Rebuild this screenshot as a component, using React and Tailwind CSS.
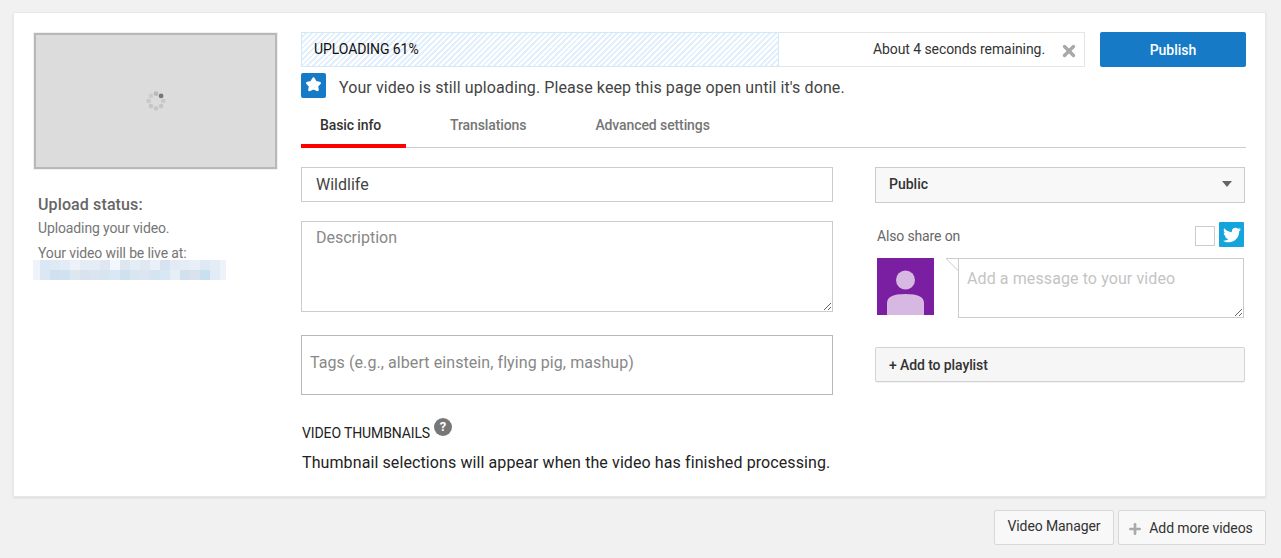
import { Plus, X } from "lucide-react";
import { FaTwitter } from "react-icons/fa";

const blurRows = [
  ["#f0f3f9", "#d9e8f4", "#dfe9f3", "#e3ecf6", "#edf2f9", "#e4edf6", "#e4ecf6", "#dfe8f2", "#f3f6fb", "#dde6f1", "#e4edf5", "#e0e8f1", "#eaf0f8", "#d7e3f0", "#e2ebf5", "#e4edf6", "#e8eff8", "#dfe9f4", "#e4edf6", "#eef3fb"],
  ["#f0f3f9", "#dbe8f4", "#d0e0ee", "#d2e1ef", "#dde7f2", "#d9e3f0", "#dbe4f0", "#d7e5f1", "#d9e8f4", "#cfe0ee", "#d8e6f2", "#dce6f0", "#d4e4f1", "#d8e7f3", "#e6eef6", "#d3e0ee", "#dae2ee", "#c9e0ee", "#e2ebf6", "#eef3fb"],
];

function Spinner() {
  const dots = [
    [19, 5.4, "#b9b9b9"], [25, 8, "#777777"], [27.6, 14, "#c9c9c9"], [25, 20, "#c6c6c6"],
    [19, 22.6, "#c6c6c6"], [13, 20, "#c6c6c6"], [10.4, 14, "#c9c9c9"], [13, 8, "#cccccc"],
  ];
  return (
    <svg width="22" height="22" viewBox="6 1 26 26">
      {dots.map(([cx, cy, fill]) => <circle key={`${cx}-${cy}`} cx={cx} cy={cy} r="2.8" fill={fill} />)}
    </svg>
  );
}

function UploadSide() {
  return (
    <div className="w-[245px] ml-[-1px] mr-[23px] shrink-0">
      <div className="h-[138px] border border-[#f0f0f0]">
        <div className="h-full border-2 border-[#b8b8b8] bg-[#dcdcdc] flex items-center justify-center">
          <Spinner />
        </div>
      </div>
      <div className="mt-[24px] pl-[5px] text-[#767676]">
        <h3 className="text-[16px] leading-[22px] font-medium tracking-[0.12px] text-[#666666]">Upload status:</h3>
        <p className="mt-[2px] text-[14px] leading-[20px] tracking-[-0.12px]">Uploading your video.</p>
        <p className="mt-[5px] text-[14px] leading-[20px] tracking-[-0.12px]">Your video will be live at:</p>
      </div>
      <div className="mt-[-3px]">
        {blurRows.map((row, i) => (
          <div key={i} className="flex h-[10px]">
            {row.map((color, j) => (
              <span key={j} className={j === 0 ? "w-[7px] h-full shrink-0" : j === 19 ? "w-[6px] h-full shrink-0" : "w-[10px] h-full shrink-0"} style={{ backgroundColor: color }} />
            ))}
          </div>
        ))}
      </div>
    </div>
  );
}

function ProgressRow() {
  return (
    <div className="flex gap-[15px]">
      <div className="relative flex-1 h-[35px] border border-[#e5e5e5] flex items-center justify-end text-[14px] tracking-[-0.08px]">
        <div className="absolute left-[-1px] top-[-1px] bottom-[-1px] w-[478px] border border-[#d3e8f8] bg-[repeating-linear-gradient(135deg,#ffffff_0px,#ffffff_2px,#e1f0fc_2px,#e1f0fc_4px)] flex items-center pl-[12px] text-[#111111]">
          UPLOADING 61%
        </div>
        <span className="relative text-[#333333]">About 4 seconds remaining.</span>
        <X className="relative ml-[15px] mr-[6px] mt-[3px] text-[#a8a8a8]" size={18} strokeWidth={4.5} />
      </div>
      <button type="button" className="w-[146px] h-[35px] pt-[2px] rounded-[2px] bg-[#167ac6] text-white text-[14px] font-medium">Publish</button>
    </div>
  );
}

function Notice() {
  return (
    <div className="mt-[6px] h-[25px] flex items-center">
      <div className="w-[25px] h-[25px] rounded-[2px] bg-[#167ac6] flex items-center justify-center">
        <svg width="17" height="17" viewBox="0 0 24 24" className="mt-[-2px]">
          <polygon points="12,4 15,9.2 20.5,10 16.5,14.2 17.5,19.5 12,17 6.5,19.5 7.5,14.2 3.5,10 9,9.2" fill="#ffffff" stroke="#ffffff" strokeWidth="4" strokeLinejoin="round" />
        </svg>
      </div>
      <p className="ml-[13px] pt-[4px] text-[16px] tracking-[0.095px] text-[#444444]">Your video is still uploading. Please keep this page open until it's done.</p>
    </div>
  );
}

function Tabs() {
  return (
    <div className="mt-[5px] h-[45px] flex border-b border-[#cccccc] text-[14px] font-medium tracking-[-0.1px] text-[#767676]">
      <div className="w-[105px] h-[45px] pl-[19px] pt-[12px] border-b-4 border-[#ff0000] text-[#333333]">Basic info</div>
      <div className="ml-[44px] pt-[12px]">Translations</div>
      <div className="ml-[69px] pt-[12px]">Advanced settings</div>
    </div>
  );
}

function BasicForm() {
  return (
    <div className="w-[532px]">
      <input
        readOnly
        defaultValue="Wildlife"
        className="block w-full h-[35px] border border-[#cccccc] px-[14px] text-[16px] text-[#444444] outline-none"
      />
      <textarea
        placeholder="Description"
        className="block mt-[19px] w-full h-[91px] border border-[#cccccc] px-[14px] py-[5px] text-[16px] leading-[22px] outline-none placeholder:text-[#888888]"
      />
      <div className="mt-[23px] h-[60px] border border-[#b8b8b8] pl-[8px] pb-[4px] flex items-center text-[16px] tracking-[0.08px] text-[#888888]">
        Tags (e.g., albert einstein, flying pig, mashup)
      </div>
      <div className="mt-[24px] h-[24px] pl-px flex items-start text-[14px] tracking-[-0.12px] text-[#222222]">
        <span className="mt-[4px] leading-[20px]">VIDEO THUMBNAILS</span>
        <span className="ml-[4px] mt-[-1px] w-[18px] h-[18px] rounded-full bg-[#777777] text-white text-[13px] leading-[18px] font-bold text-center">?</span>
      </div>
      <p className="mt-[9px] pl-px text-[16px] leading-[22px] tracking-[0.1px] text-[#222222]">Thumbnail selections will appear when the video has finished processing.</p>
    </div>
  );
}

function ShareForm() {
  return (
    <div className="w-[370px]">
      <div className="h-[36px] pb-[2px] border border-[#cccccc] bg-[#f8f8f8] pl-[13px] pr-[12px] flex items-center justify-between text-[14px] font-medium text-[#333333]">
        Public
        <svg width="10" height="6" viewBox="0 0 10 6"><polygon points="0,0 10,0 5,6" fill="#666666" /></svg>
      </div>
      <div className="mt-[19px] pl-[2px] pr-px h-[25px] flex items-center text-[14px] tracking-[-0.15px] text-[#666666]">
        <span className="mt-[3px]">Also share on</span>
        <span className="ml-auto w-[20px] h-[20px] mt-[3px] border border-[#cccccc] bg-white" />
        <span className="ml-[4px] w-[25px] h-[25px] rounded-[1px] bg-[#15a5dd] flex items-center justify-center text-white">
          <FaTwitter size={18} />
        </span>
      </div>
      <div className="mt-[11px] pl-[2px] pr-px flex items-start">
        <div className="w-[57px] h-[57px] bg-[#7b1fa2] shrink-0">
          <svg width="57" height="57" viewBox="0 0 57 57">
            <circle cx="28.5" cy="22" r="9.5" fill="#d7b8e2" />
            <path d="M10 57V45c0-6 6-9 18.5-9S47 39 47 45v12z" fill="#d7b8e2" />
          </svg>
        </div>
        <div className="relative ml-[24px] flex-1">
          <svg width="13" height="14" viewBox="0 0 13 14" className="absolute left-[-12px] top-0">
            <path d="M0 0.5H13M0 0.5L12.5 13" stroke="#cccccc" fill="none" />
          </svg>
          <textarea
            placeholder="Add a message to your video"
            className="block w-full h-[60px] border border-[#cccccc] px-[8px] pt-[9px] pb-[7px] text-[16px] leading-[22px] tracking-[0.1px] outline-none placeholder:text-[#c4c4c4]"
          />
        </div>
      </div>
      <button type="button" className="mt-[29px] w-full h-[35px] pt-px rounded-[2px] border border-[#d3d3d3] bg-[#f6f6f6] pl-[13px] text-left text-[14px] font-medium tracking-[-0.1px] text-[#333333] shadow-[0_1px_0_#0000000d]">
        + Add to playlist
      </button>
    </div>
  );
}

export default function App() {
  return (
    <div className="h-[558px] overflow-hidden bg-[#f1f1f1] pt-[12px] font-['Roboto',sans-serif]">
      <div className="ml-[13px] w-[1253px] h-[485px] bg-white border border-[#e8e8e8] shadow-[0_1px_2px_#0000001a] pl-[20px] pr-[19px] pt-[19px] flex">
        <UploadSide />
        <div className="flex-1 min-w-0">
          <ProgressRow />
          <Notice />
          <Tabs />
          <div className="mt-[19px] flex justify-between pr-px">
            <BasicForm />
            <ShareForm />
          </div>
        </div>
      </div>
      <div className="mt-[13px] ml-[994px] flex gap-[4px] text-[14px] tracking-[-0.1px] text-[#333333]">
        <button type="button" className="w-[120px] h-[35px] pb-[2px] rounded-[2px] border border-[#d8d8d8] bg-[#f8f8f8]">Video Manager</button>
        <button type="button" className="w-[148px] h-[35px] pt-[2px] pr-[4px] rounded-[2px] border border-[#d8d8d8] bg-[#f8f8f8] flex items-center justify-center">
          <Plus className="mr-[6px] text-[#aaaaaa]" size={16} strokeWidth={4} />
          Add more videos
        </button>
      </div>
    </div>
  );
}
